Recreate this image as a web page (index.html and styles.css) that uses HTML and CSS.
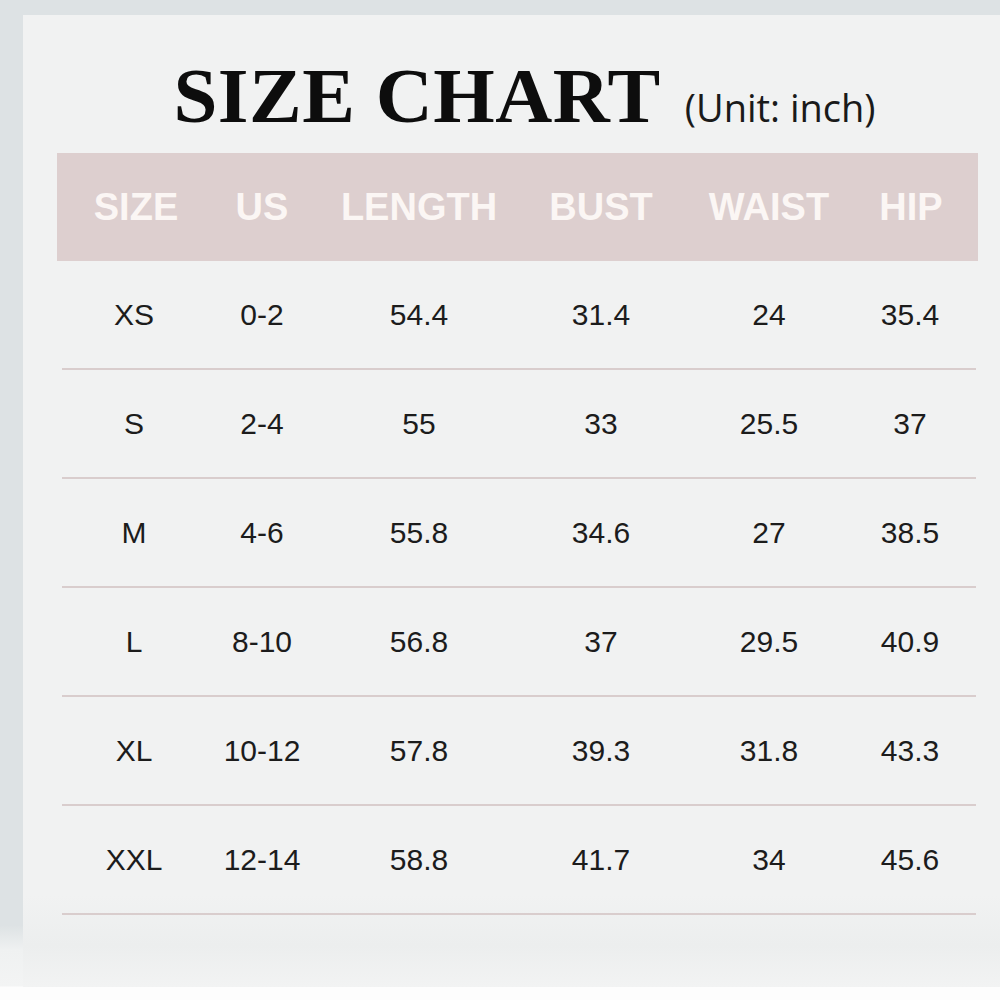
FILE: index.html
```html
<!DOCTYPE html>
<html>
<head>
<meta charset="utf-8">
<link rel="stylesheet" href="styles.css">
</head>
<body>
<div class="card">
  <div class="title-row">
    <h1 class="title">SIZE CHART</h1>
    <span class="unit">(Unit: inch)</span>
  </div>
  <div class="table">
    <div class="head">
      <span>SIZE</span><span>US</span><span>LENGTH</span><span>BUST</span><span>WAIST</span><span>HIP</span>
    </div>
    <div class="row"><span>XS</span><span>0-2</span><span>54.4</span><span>31.4</span><span>24</span><span>35.4</span></div>
    <div class="row"><span>S</span><span>2-4</span><span>55</span><span>33</span><span>25.5</span><span>37</span></div>
    <div class="row"><span>M</span><span>4-6</span><span>55.8</span><span>34.6</span><span>27</span><span>38.5</span></div>
    <div class="row"><span>L</span><span>8-10</span><span>56.8</span><span>37</span><span>29.5</span><span>40.9</span></div>
    <div class="row"><span>XL</span><span>10-12</span><span>57.8</span><span>39.3</span><span>31.8</span><span>43.3</span></div>
    <div class="row"><span>XXL</span><span>12-14</span><span>58.8</span><span>41.7</span><span>34</span><span>45.6</span></div>
  </div>
  <div class="floor"></div>
</div>
</body>
</html>
```

FILE: styles.css
```css
html, body {
  margin: 0;
  padding: 0;
}
body {
  background: linear-gradient(to bottom, #dde2e4 0, #dde2e4 925px, #eff1f1 950px, #f3f4f4 986px, #fdfdfd 987px, #fdfdfd 1000px);
  width: 1000px;
  height: 1000px;
  overflow: hidden;
}
.card {
  margin: 15px 0 0 23px;
  height: 972px;
  background: #f1f2f2;
  padding-left: 34px;
  display: flex;
  flex-direction: column;
  position: relative;
}
.title-row {
  height: 138px;
  padding-top: 26px;
  display: flex;
  align-items: baseline;
  justify-content: center;
  padding-right: 8px;
  box-sizing: border-box;
}
.title {
  margin: 0;
  font-family: "Liberation Serif", "Times New Roman", serif;
  font-weight: bold;
  font-size: 79px;
  letter-spacing: 0.5px;
  line-height: 110px;
  color: #0d0d0d;
}
.unit {
  margin-left: 24px;
  font-family: "Open Sans", "Noto Sans", sans-serif;
  font-size: 38px;
  color: #1a1a1a;
}
.table {
  position: relative;
  z-index: 1;
  width: 921px;
  font-family: "Liberation Sans", Arial, sans-serif;
}
.head {
  height: 108px;
  background: #ddcfcf;
  display: grid;
  grid-template-columns: 158px 94px 220px 144px 192px 92px;
  align-items: center;
  color: #fbf6f4;
  font-weight: bold;
  font-size: 38px;
}
.head span, .row span {
  text-align: center;
}
.row {
  margin: 0 2px 0 5px;
  height: 107px;
  border-bottom: 2px solid #d9cdcd;
  display: grid;
  grid-template-columns: 144px 112px 202px 162px 174px 108px;
  align-items: center;
  font-size: 30px;
  color: #1c1c1c;
}
.floor {
  position: absolute;
  left: 0;
  right: 0;
  top: 880px;
  height: 92px;
  background: linear-gradient(#f1f2f2, #eceeee 55%, #f2f3f3);
  z-index: 0;
}
```
